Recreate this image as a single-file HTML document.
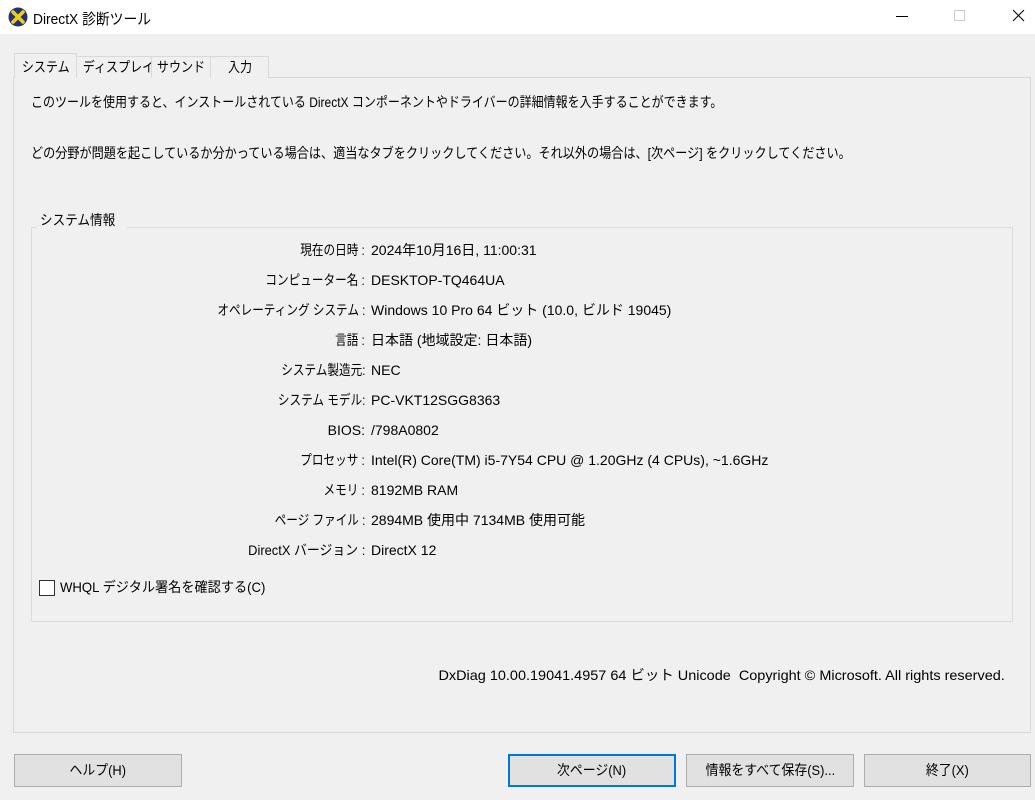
<!DOCTYPE html>
<html><head><meta charset="utf-8"><style>
*{margin:0;padding:0;box-sizing:border-box}
body{width:1035px;height:800px;background:#f0f0f0;font-family:"Liberation Sans","Noto Sans CJK JP",sans-serif;font-size:14px;color:#000;position:relative;overflow:hidden}
.abs{position:absolute;white-space:nowrap}
#title{left:0;top:0;width:1035px;height:34px;background:#fff}
.tab{position:absolute;top:56px;height:22px;border:1px solid #d9d9d9;border-bottom:none;background:#f0f0f0;font-size:14px;line-height:20px;text-align:center;white-space:nowrap}
.tab span{display:inline-block;transform:scaleX(0.86)}
#panel{left:13px;top:77px;width:1018px;height:656px;border:1px solid #d9d9d9;background:#f0f0f0}
#grp{left:31px;top:227px;width:982px;height:395px;border:1px solid #dcdcdc}
.lbl{position:absolute;right:670px;text-align:right;white-space:nowrap;line-height:20px;transform:scaleX(0.83);transform-origin:right center}
.val{position:absolute;left:371px;white-space:nowrap;line-height:20px}
.btn{position:absolute;top:754px;height:33px;border:1px solid #adadad;background:#e1e1e1;text-align:center;line-height:31px;font-size:14px;white-space:nowrap}
.btn span{display:inline-block;transform:scaleX(0.92)}
</style></head><body>
<div id="title" class="abs"></div>
<svg class="abs" style="left:8px;top:7px" width="20" height="20" viewBox="0 0 20 20"><circle cx="10" cy="10" r="9.5" fill="#2a2f6e"/><path d="M5 5 L15 15 M15 5 L5 15" stroke="#e8d21c" stroke-width="3.6" stroke-linecap="round"/></svg>
<div class="abs" style="left:33px;top:8px;font-size:15px;transform:scaleX(0.92);transform-origin:left">DirectX 診断ツール</div>
<div class="abs" style="left:896px;top:16px;width:12px;height:1px;background:#000"></div>
<div class="abs" style="left:954px;top:10px;width:11px;height:11px;border:1px solid #ccc"></div>
<svg class="abs" style="left:1012px;top:9px" width="13" height="13"><path d="M1 1L12 12M12 1L1 12" stroke="#000" stroke-width="1"/></svg>

<div id="panel" class="abs"></div>
<div class="tab" style="left:14px;top:53px;width:63px;height:25px;background:#f0f0f0;z-index:2;line-height:26px"><span>システム</span></div>
<div class="tab" style="left:76px;width:76px"><span>ディスプレイ</span></div>
<div class="tab" style="left:151px;width:60px"><span>サウンド</span></div>
<div class="tab" style="left:210px;width:59px"><span>入力</span></div>

<div class="abs" style="left:31px;top:92px;line-height:20px;transform:scaleX(0.857);transform-origin:left">このツールを使用すると、インストールされている DirectX コンポーネントやドライバーの詳細情報を入手することができます。</div>
<div class="abs" style="left:31px;top:143px;line-height:20px;transform:scaleX(0.866);transform-origin:left">どの分野が問題を起こしているか分かっている場合は、適当なタブをクリックしてください。それ以外の場合は、[次ページ] をクリックしてください。</div>

<div id="grp" class="abs"></div>
<div class="abs" style="left:37px;top:210px;background:#f0f0f0;padding:0 3px;line-height:20px"><span style="display:inline-block;transform:scaleX(0.9);transform-origin:left">システム情報</span></div>

<div class="lbl" style="top:240px">現在の日時 :</div><div class="val" style="top:240px">2024年10月16日, 11:00:31</div>
<div class="lbl" style="top:270px">コンピューター名 :</div><div class="val" style="top:270px">DESKTOP-TQ464UA</div>
<div class="lbl" style="top:300px">オペレーティング システム :</div><div class="val" style="top:300px">Windows 10 Pro 64 ビット (10.0, ビルド 19045)</div>
<div class="lbl" style="top:330px">言語 :</div><div class="val" style="top:330px">日本語 (地域設定: 日本語)</div>
<div class="lbl" style="top:360px">システム製造元:</div><div class="val" style="top:360px">NEC</div>
<div class="lbl" style="top:390px">システム モデル:</div><div class="val" style="top:390px">PC-VKT12SGG8363</div>
<div class="lbl" style="top:420px;transform:none">BIOS:</div><div class="val" style="top:420px">/798A0802</div>
<div class="lbl" style="top:450px">プロセッサ :</div><div class="val" style="top:450px">Intel(R) Core(TM) i5-7Y54 CPU @ 1.20GHz (4 CPUs), ~1.6GHz</div>
<div class="lbl" style="top:480px">メモリ :</div><div class="val" style="top:480px">8192MB RAM</div>
<div class="lbl" style="top:510px">ページ ファイル :</div><div class="val" style="top:510px">2894MB 使用中 7134MB 使用可能</div>
<div class="lbl" style="top:540px;transform:scaleX(0.92)">DirectX バージョン :</div><div class="val" style="top:540px">DirectX 12</div>

<div class="abs" style="left:39px;top:580px;width:16px;height:16px;border:1px solid #333;background:#fff"></div>
<div class="abs" style="left:60px;top:577px;line-height:20px;transform:scaleX(0.94);transform-origin:left">WHQL デジタル署名を確認する(C)</div>

<div class="abs" style="right:30px;top:665px;line-height:20px;transform:scaleX(1.032);transform-origin:right">DxDiag 10.00.19041.4957 64 ビット Unicode&nbsp; Copyright © Microsoft. All rights reserved.</div>

<div class="btn" style="left:14px;width:168px"><span>ヘルプ(H)</span></div>
<div class="btn" style="left:508px;width:168px;border:2px solid #0078d7;line-height:29px"><span>次ページ(N)</span></div>
<div class="btn" style="left:686px;width:168px"><span>情報をすべて保存(S)...</span></div>
<div class="btn" style="left:864px;width:167px"><span>終了(X)</span></div>
</body></html>
